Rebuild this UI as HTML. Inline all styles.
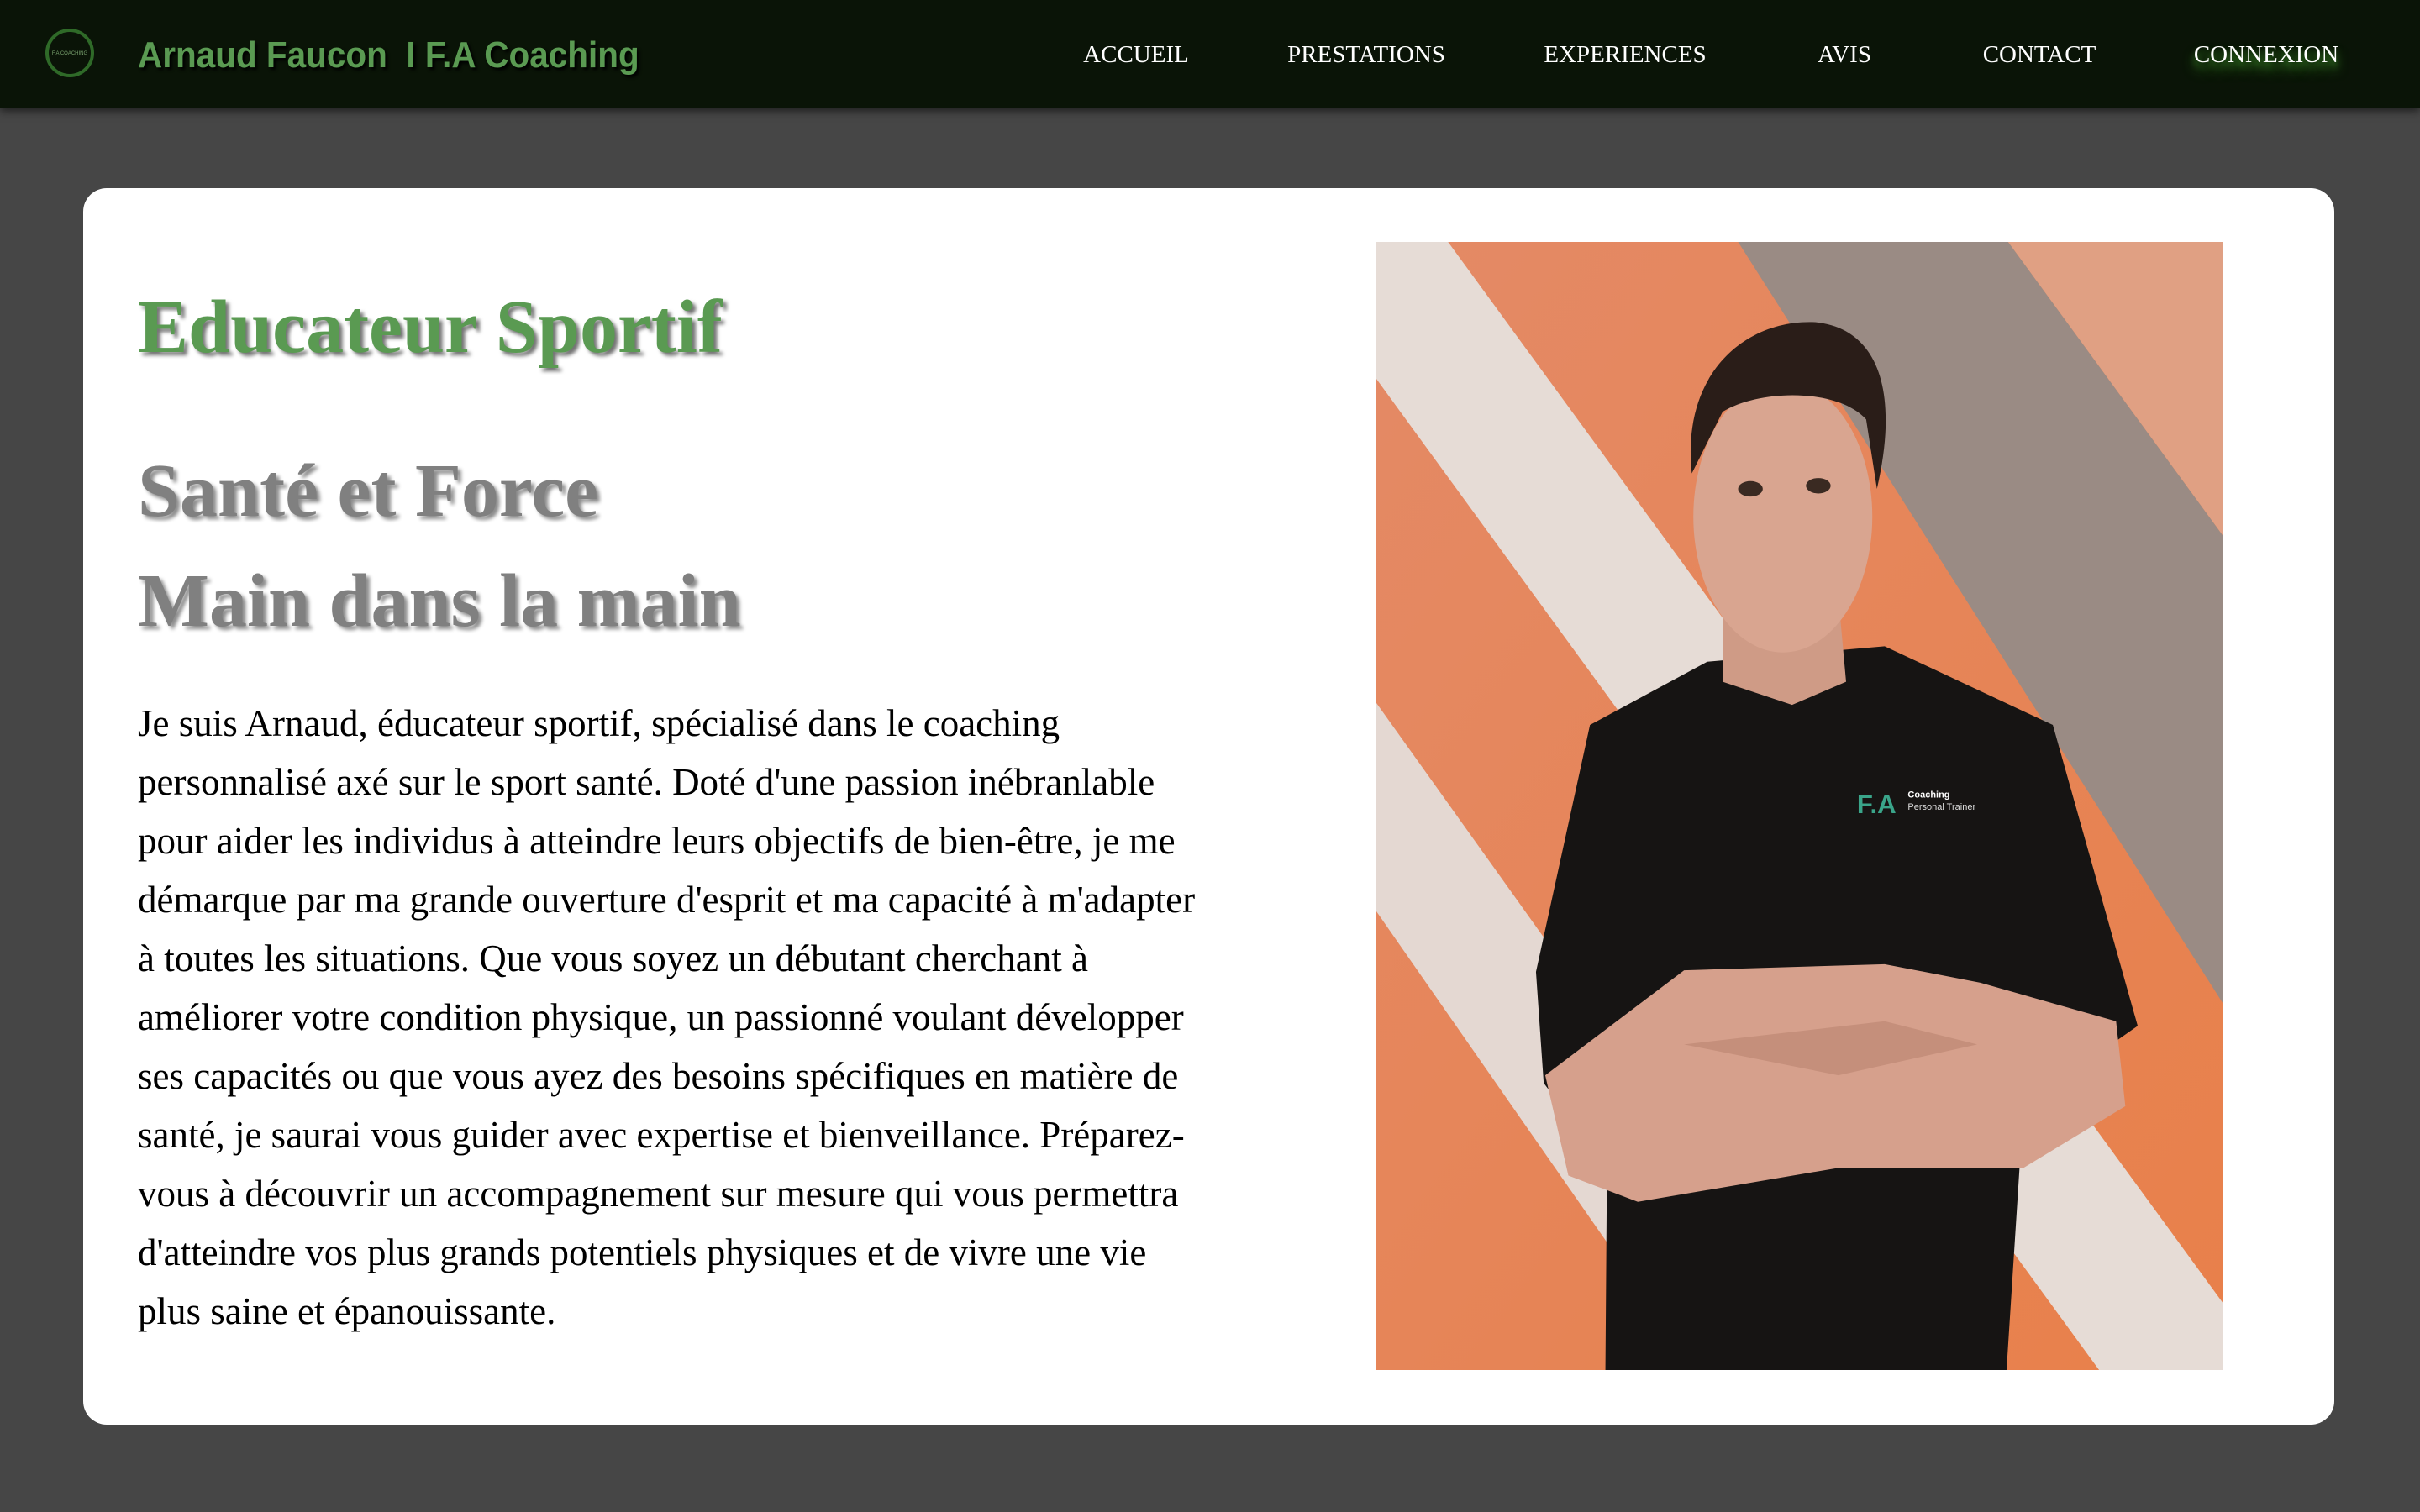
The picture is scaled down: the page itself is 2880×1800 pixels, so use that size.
<!DOCTYPE html>
<html><head><meta charset="utf-8"><style>
html,body{margin:0;padding:0}
body{width:2880px;height:1800px;background:#464646;position:relative;overflow:hidden;font-family:"Liberation Serif",serif}
.hdr{position:absolute;left:0;top:0;width:2880px;height:128px;background:#0a1407;box-shadow:0 4px 10px rgba(0,0,0,.6)}
.logo{position:absolute;left:52px;top:32px;width:62px;height:62px}
.brand{position:absolute;left:164px;top:41px;font-family:"Liberation Sans",sans-serif;font-weight:bold;font-size:44px;color:#5a9a52;white-space:nowrap;transform-origin:0 0;transform:scaleX(.92);text-shadow:3px 3px 4px #000}
.nav{position:absolute;top:49px;font-size:29px;color:#fff;white-space:nowrap;transform:translateX(-50%)}
.card{position:absolute;left:99px;top:224px;width:2679px;height:1472px;background:#fff;border-radius:28px}
.h{position:absolute;left:164px;font-weight:bold;font-size:90px;white-space:nowrap;line-height:1}
.g{color:#5a9a52;text-shadow:4px 4px 4px rgba(0,0,0,.55)}
.gr{color:#808080;text-shadow:4px 4px 4px rgba(0,0,0,.45)}
.p{position:absolute;left:164px;top:826px;font-size:45px;line-height:70px;color:#000;white-space:nowrap}
.photo{position:absolute;left:1637px;top:288px;width:1008px;height:1343px}
</style></head><body>
<div class="hdr">
<svg class="logo" viewBox="0 0 62 62"><circle cx="31" cy="31" r="27" fill="none" stroke="#2f6a28" stroke-width="4"/><text x="31" y="33" font-size="6" fill="#7aa36f" text-anchor="middle" font-family="Liberation Sans">F.A COACHING</text></svg>
<div class="brand">Arnaud Faucon&nbsp; I F.A Coaching</div>
<div class="nav" style="left:1352px">ACCUEIL</div>
<div class="nav" style="left:1626px">PRESTATIONS</div>
<div class="nav" style="left:1934px">EXPERIENCES</div>
<div class="nav" style="left:2195px">AVIS</div>
<div class="nav" style="left:2427px">CONTACT</div>
<div class="nav" style="left:2697px;text-shadow:0 10px 14px #3f8a2a,0 6px 8px #2c6a1e">CONNEXION</div>
</div>
<div class="card"></div>
<div class="h g" style="top:345px">Educateur Sportif</div>
<div class="h gr" style="top:540px">Santé et Force</div>
<div class="h gr" style="top:671px">Main dans la main</div>
<div class="p">Je suis Arnaud, éducateur sportif, spécialisé dans le coaching<br>personnalisé axé sur le sport santé. Doté d'une passion inébranlable<br>pour aider les individus à atteindre leurs objectifs de bien-être, je me<br>démarque par ma grande ouverture d'esprit et ma capacité à m'adapter<br>à toutes les situations. Que vous soyez un débutant cherchant à<br>améliorer votre condition physique, un passionné voulant développer<br>ses capacités ou que vous ayez des besoins spécifiques en matière de<br>santé, je saurai vous guider avec expertise et bienveillance. Préparez-<br>vous à découvrir un accompagnement sur mesure qui vous permettra<br>d'atteindre vos plus grands potentiels physiques et de vivre une vie<br>plus saine et épanouissante.</div>
<svg class="photo" viewBox="0 0 549 731" preserveAspectRatio="none">
<defs><linearGradient id="bg" x1="0" y1="0" x2="1" y2="1"><stop offset="0" stop-color="#e48a66"/><stop offset="1" stop-color="#e8804a"/></linearGradient></defs>
<rect width="549" height="731" fill="url(#bg)"/>
<polygon points="410,0 549,0 549,190" fill="#e0a083"/>
<polygon points="47,0 600,757 469,731 0,88 0,0" fill="#e6dcd6"/>
<polygon points="235,0 410,0 549,190 549,493" fill="#9a8b84"/>
<polygon points="0,298 230,620 200,720 0,433" fill="#e4d8d2"/>
<polygon points="104,473 139,313 215,272 330,262 439,313 494,508 420,560 409,731 149,731 150,600 109,545" fill="#161413"/>
<polygon points="225,230 300,230 305,285 270,300 225,285" fill="#cf9b86"/>
<ellipse cx="264" cy="178" rx="58" ry="88" fill="#d9a590"/>
<path d="M205,150 C198,85 240,50 285,52 C325,56 340,95 325,160 L318,115 C300,95 250,95 225,110 Z" fill="#2a1d18"/>
<ellipse cx="243" cy="160" rx="8" ry="5" fill="#3a2a22"/>
<ellipse cx="287" cy="158" rx="8" ry="5" fill="#3a2a22"/>
<polygon points="110,540 200,472 330,468 392,480 480,505 486,560 420,600 300,600 170,622 125,605" fill="#d6a08c"/>
<polygon points="200,520 330,505 390,520 300,540" fill="#c58f7b"/>
<text x="312" y="370" font-family="Liberation Sans" font-weight="bold" font-size="17" fill="#3aa58a">F.A</text>
<text x="345" y="360" font-family="Liberation Sans" font-weight="bold" font-size="6" fill="#fff">Coaching</text>
<text x="345" y="368" font-family="Liberation Sans" font-size="6" fill="#ddd">Personal Trainer</text>
</svg>
</body></html>
